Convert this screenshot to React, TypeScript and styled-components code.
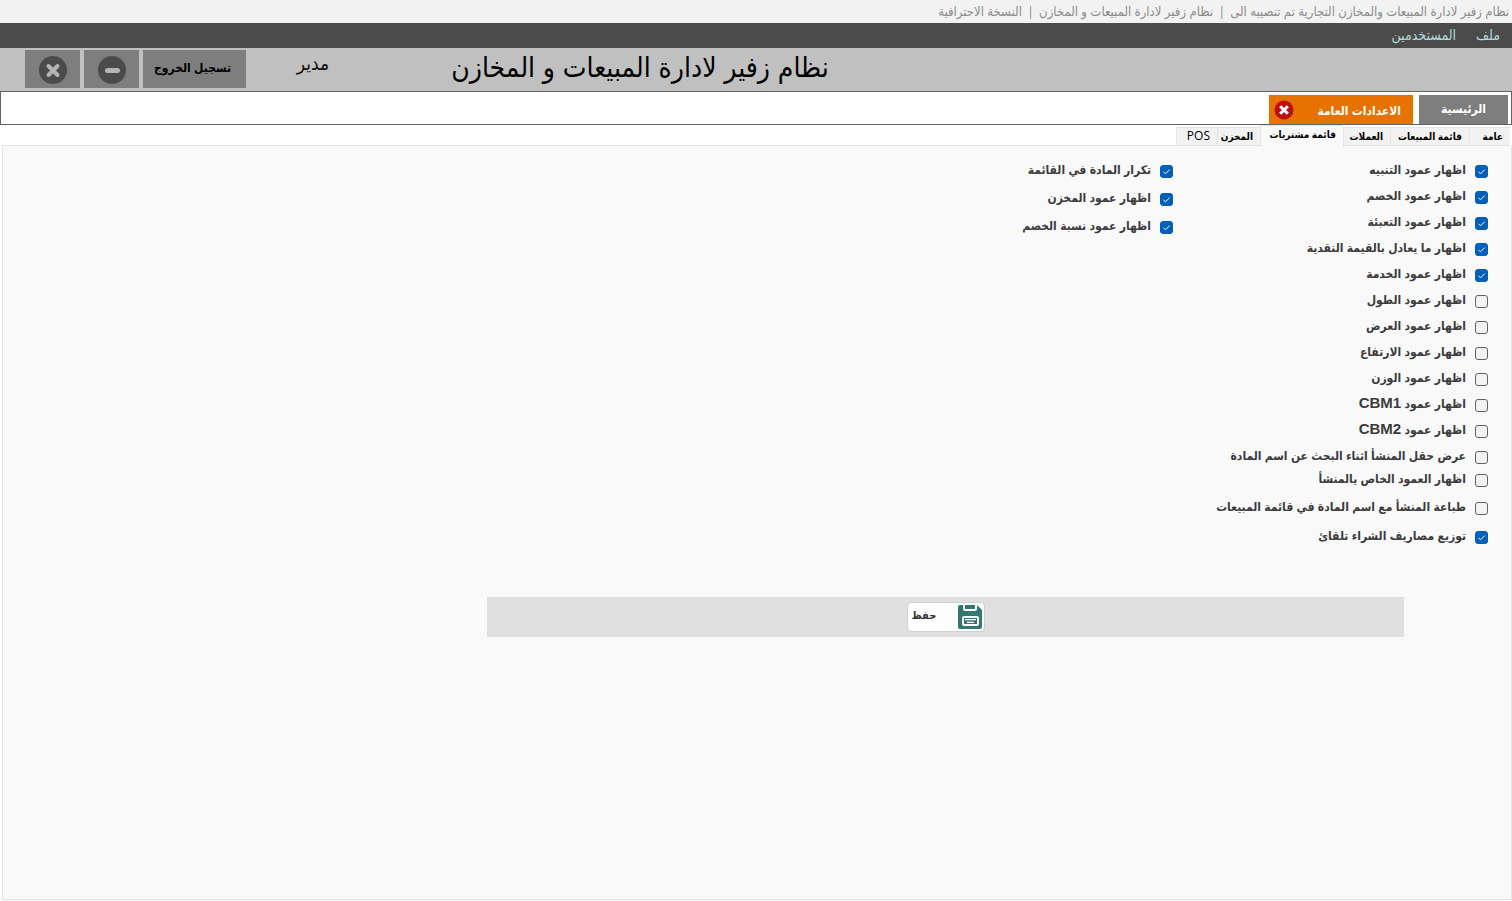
import React, { useState } from "react";
import styled, { createGlobalStyle } from "styled-components";

const GlobalStyle = createGlobalStyle`
  *, *::before, *::after { box-sizing: border-box; }
  html, body, #root { height: 100%; }
  body {
    margin: 0;
    background: #fff;
    font-family: "Liberation Sans", "DejaVu Sans Condensed", "DejaVu Sans", sans-serif;
  }
  button, input { font-family: inherit; }
`;

const Window = styled.div`
  direction: rtl;
  min-height: 100%;
  display: flex;
  flex-direction: column;
`;

const TitleBar = styled.header`
  height: 23px;
  padding: 0 3px;
  display: flex;
  gap: 5px;
  background: #f2f2f2;
  color: #8c8c8c;
  font-family: "Open Sans", "DejaVu Sans Condensed", sans-serif;
  font-size: 13px;
  line-height: 23px;
  white-space: nowrap;
`;

const MenuBar = styled.nav`
  height: 25px;
  padding: 0 12px;
  display: flex;
  align-items: center;
  gap: 20px;
  background: #4b4b4b;
`;

const MenuItem = styled.button`
  border: 0;
  padding: 0;
  background: none;
  color: #b4dcd8;
  font-size: 14px;
  line-height: 25px;
`;

const Header = styled.div`
  direction: ltr;
  height: 43px;
  padding: 2px 25px 3px;
  display: flex;
  align-items: stretch;
  background: #c0c0c0;
`;

const HeaderButtons = styled.div`
  display: flex;
  gap: 4px;
`;

const HeaderButton = styled.button<{ $icon?: boolean }>`
  width: ${(p) => (p.$icon ? 55 : 103)}px;
  border: 0;
  padding: ${(p) => (p.$icon ? "2px 0 0" : "0 4px 3px 0")};
  display: flex;
  align-items: center;
  justify-content: center;
  background: #7e7e7e;
  color: #000;
  font-size: 12px;
  font-weight: bold;
  white-space: nowrap;
`;

const UserName = styled.div`
  width: 134px;
  text-align: center;
  color: #111;
  font-size: 19px;
  line-height: 28px;
`;

const AppTitle = styled.h1`
  width: 520px;
  margin: 0;
  text-align: center;
  color: #000;
  font-size: 28px;
  font-weight: normal;
  line-height: 36px;
  white-space: nowrap;
`;

const PageTabs = styled.div`
  height: 34px;
  padding: 3px 3px 0;
  display: flex;
  gap: 6px;
  border: 1px solid #646464;
  background: #fff;
`;

const PageTab = styled.div<{ $active?: boolean }>`
  width: ${(p) => (p.$active ? 144 : 89)}px;
  padding: ${(p) => (p.$active ? "3px 12px 0 5px" : "0 0 2px")};
  display: flex;
  align-items: center;
  justify-content: ${(p) => (p.$active ? "space-between" : "center")};
  background: ${(p) => (p.$active ? "#e67300" : "#7e7e7e")};
`;

const PageTabButton = styled.button`
  border: 0;
  padding: 0;
  background: none;
  color: #fff;
  font-size: 12px;
  font-weight: bold;
  line-height: 26px;
  white-space: nowrap;
`;

const CloseTab = styled.button`
  width: 20px;
  height: 20px;
  border: 0;
  padding: 0;
  margin-bottom: 3px;
  background: none;
  line-height: 0;
`;

const SectionTabs = styled.div`
  height: 21px;
  padding: 0 2px;
  display: flex;
  align-items: flex-end;
`;

const SectionTab = styled.button<{ $width: number; $active?: boolean }>`
  width: ${(p) => p.$width}px;
  height: ${(p) => (p.$active ? 21 : 19)}px;
  border: 1px solid #e4e4e4;
  border-width: 1px 0 ${(p) => (p.$active ? 0 : 1)}px 1px;
  padding: 0 7px ${(p) => (p.$active ? 4 : 1)}px 0;
  background: ${(p) => (p.$active ? "#f9f9f9" : "#f2f2f2")};
  color: #000;
  font-family: "Open Sans", "DejaVu Sans Condensed", sans-serif;
  font-size: ${(p) => (p.lang === "en" ? 12 : 10)}px;
  font-weight: ${(p) => (p.lang === "en" ? 400 : 600)};
  line-height: 16px;
  text-align: start;
  white-space: nowrap;
`;

const TabFill = styled.div`
  flex: 1;
  height: 1px;
  background: #e4e4e4;
`;

const Panel = styled.main`
  flex: 1;
  margin: 0 0 1px 2px;
  padding: 12px 23px;
  border: 1px solid #e4e4e4;
  border-top: 0;
  background: #f9f9f9;
`;

const OptionColumns = styled.div`
  display: grid;
  grid-template-columns: 315px 1fr;
  align-items: start;
`;

const OptionColumn = styled.div<{ $gap?: number }>`
  display: flex;
  flex-direction: column;
  align-items: flex-start;
  gap: ${(p) => p.$gap ?? 0}px;
`;

const Option = styled.label<{ $height: number }>`
  height: ${(p) => p.$height}px;
  display: flex;
  align-items: center;
  gap: 9px;
  color: #3c3c3c;
  font-size: 12px;
  font-weight: bold;
  white-space: nowrap;
`;

const OptionText = styled.span`
  line-height: 18px;
  padding-bottom: 3px;
`;

const Latin = styled.span`
  font-size: 15px;
`;

const Tick = styled.input`
  appearance: none;
  width: 13px;
  height: 13px;
  margin: 0;
  border: 1px solid #626262;
  border-radius: 3px;
  background: #f3f3f3;
  &:checked {
    border-color: #005fb8;
    background: #005fb8 url("data:image/svg+xml,%3Csvg xmlns='http://www.w3.org/2000/svg' viewBox='0 0 11 11'%3E%3Cpath d='M2.5 5.8 4.5 7.8 8.7 3.6' fill='none' stroke='white'/%3E%3C/svg%3E") center / 11px 11px no-repeat;
  }
`;

const SaveBar = styled.div`
  height: 40px;
  margin: 49px 84px 0 461px;
  display: flex;
  align-items: center;
  justify-content: center;
  background: #e0e0e0;
`;

const SaveButton = styled.button`
  width: 78px;
  height: 30px;
  border: 1px solid #d0d0d0;
  border-radius: 4px;
  padding: 0 2px 0 4px;
  display: flex;
  align-items: center;
  justify-content: space-between;
  background: #fdfdfd;
  color: #333;
`;

const SaveText = styled.span`
  padding-bottom: 3px;
  font-size: 11px;
  font-weight: bold;
`;

type Item = { text: string; latin?: string; on?: boolean; height?: number };

const purchaseColumns: Item[] = [
  { text: "اظهار عمود التنبيه", on: true },
  { text: "اظهار عمود الخصم", on: true },
  { text: "اظهار عمود التعبئة", on: true },
  { text: "اظهار ما يعادل بالقيمة النقدية", on: true },
  { text: "اظهار عمود الخدمة", on: true },
  { text: "اظهار عمود الطول" },
  { text: "اظهار عمود العرض" },
  { text: "اظهار عمود الارتفاع" },
  { text: "اظهار عمود الوزن" },
  { text: "اظهار عمود ", latin: "CBM1" },
  { text: "اظهار عمود ", latin: "CBM2" },
  { text: "عرض حقل المنشأ اثناء البحث عن اسم المادة" },
  { text: "اظهار العمود الخاص يالمنشأ", height: 20 },
  { text: "طباعة المنشأ مع اسم المادة في قائمة المبيعات", height: 36 },
  { text: "توزيع مصاريف الشراء تلقائ", on: true, height: 22 },
];

const listOptions: Item[] = [
  { text: "تكرار المادة في القائمة", on: true },
  { text: "اظهار عمود المخزن", on: true },
  { text: "اظهار عمود نسبة الخصم", on: true },
];

const sections = [
  { text: "عامة", width: 41 },
  { text: "قائمة المبيعات", width: 79 },
  { text: "العملات", width: 47 },
  { text: "قائمة مشتريات", width: 83, active: true },
  { text: "المخزن", width: 43 },
  { text: "POS", width: 41, lang: "en" },
];

function CheckOption({ item }: { item: Item }) {
  const [on, setOn] = useState(Boolean(item.on));
  return (
    <Option $height={item.height ?? 26}>
      <Tick type="checkbox" checked={on} onChange={() => setOn(!on)} />
      <OptionText>
        {item.text}
        {item.latin && <Latin>{item.latin}</Latin>}
      </OptionText>
    </Option>
  );
}

export default function App() {
  return (
    <Window lang="ar">
      <GlobalStyle />
      <TitleBar>
        <span>نظام زفير لادارة المبيعات والمخازن التجارية تم تنصيبه الى</span>
        <span>|</span>
        <span>نظام زفير لادارة المبيعات و المخازن</span>
        <span>|</span>
        <span>النسخة الاحترافية</span>
      </TitleBar>
      <MenuBar>
        <MenuItem>ملف</MenuItem>
        <MenuItem>المستخدمين</MenuItem>
      </MenuBar>
      <Header>
        <HeaderButtons>
          <HeaderButton $icon aria-label="اغلاق">
            <svg width="28" height="28" viewBox="0 0 28 28">
              <circle cx="14" cy="14" r="14" fill="#4b4b4b" />
              <path d="M9.500 10 18.500 19M18.500 10 9.500 19" stroke="#b4b4b4" strokeWidth="4" strokeLinecap="round" />
            </svg>
          </HeaderButton>
          <HeaderButton $icon aria-label="تصغير">
            <svg width="28" height="28" viewBox="0 0 28 28">
              <circle cx="14" cy="14" r="14" fill="#4b4b4b" />
              <path d="M9.500 14.500h10" stroke="#b4b4b4" strokeWidth="5" strokeLinecap="round" />
            </svg>
          </HeaderButton>
          <HeaderButton>تسجيل الخروج</HeaderButton>
        </HeaderButtons>
        <UserName>مدير</UserName>
        <AppTitle dir="rtl">نظام زفير لادارة المبيعات و المخازن</AppTitle>
      </Header>
      <PageTabs>
        <PageTab>
          <PageTabButton>الرئيسية</PageTabButton>
        </PageTab>
        <PageTab $active>
          <PageTabButton>الاعدادات العامة</PageTabButton>
          <CloseTab aria-label="اغلاق التبويب">
            <svg width="20" height="20" viewBox="0 0 20 20">
              <circle cx="10" cy="10" r="9.5" fill="#bd1010" />
              <path d="M6.2 6.2 13.8 13.8M13.8 6.2 6.2 13.8" stroke="#fff" strokeWidth="3" />
            </svg>
          </CloseTab>
        </PageTab>
      </PageTabs>
      <SectionTabs>
        {sections.map((s) => (
          <SectionTab key={s.text} $width={s.width} $active={s.active} lang={s.lang}>
            {s.text}
          </SectionTab>
        ))}
        <TabFill />
      </SectionTabs>
      <Panel>
        <OptionColumns>
          <OptionColumn>
            {purchaseColumns.map((o) => (
              <CheckOption key={o.text + (o.latin ?? "")} item={o} />
            ))}
          </OptionColumn>
          <OptionColumn $gap={2}>
            {listOptions.map((o) => (
              <CheckOption key={o.text} item={o} />
            ))}
          </OptionColumn>
        </OptionColumns>
        <SaveBar>
          <SaveButton>
            <svg width="24" height="24" viewBox="0 0 24 24">
              <path d="M2 0h17l5 5v17a2 2 0 0 1-2 2H2a2 2 0 0 1-2-2V2a2 2 0 0 1 2-2z" fill="#317873" />
              <path d="M6 0v4a1 1 0 0 0 1 1h10a1 1 0 0 0 1-1V0" fill="none" stroke="#fff" strokeWidth="2" />
              <rect x="5" y="12" width="15" height="8" rx="1" fill="none" stroke="#fff" strokeWidth="2" />
              <path d="M7 14.600h11M9 17.400h7" stroke="#fff" strokeWidth="1.200" />
            </svg>
            <SaveText>حفظ</SaveText>
          </SaveButton>
        </SaveBar>
      </Panel>
    </Window>
  );
}
